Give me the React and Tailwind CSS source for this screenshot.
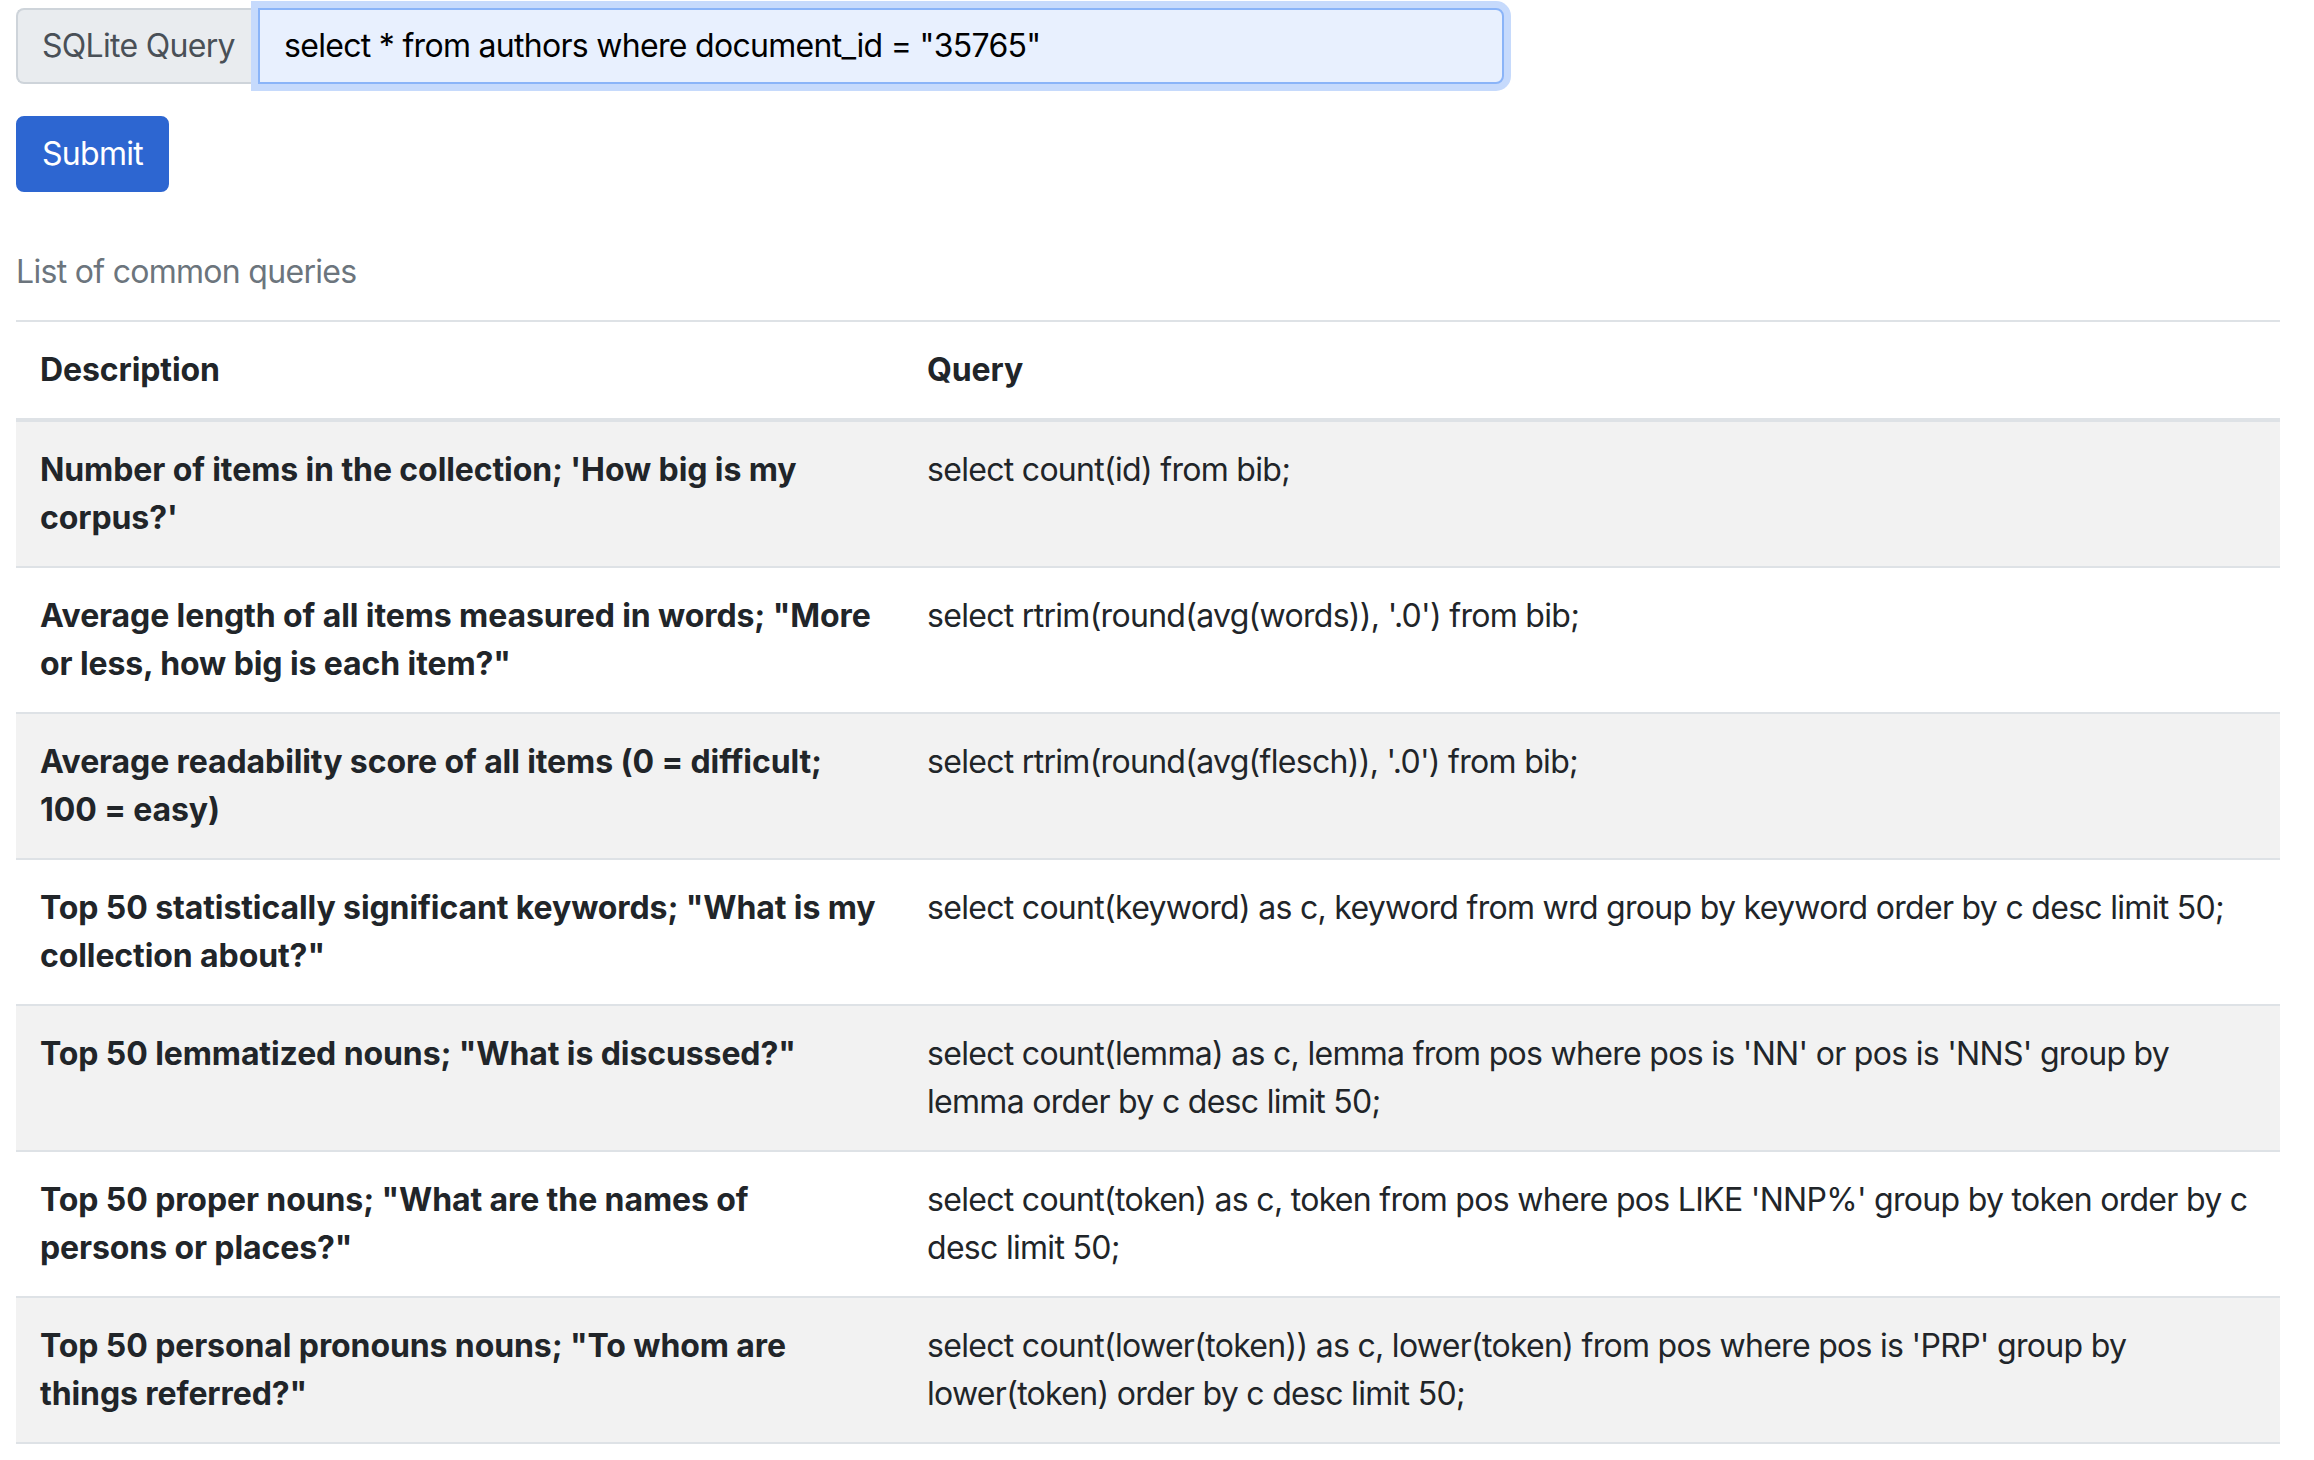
import React from 'react';

const queries = [
    {
        desc: "Number of items in the collection; 'How big is my corpus?'",
        sql: 'select count(id) from bib;'
    },
    {
        desc: 'Average length of all items measured in words; "More or less, how big is each item?"',
        sql: "select rtrim(round(avg(words)), '.0') from bib;"
    },
    {
        desc: 'Average readability score of all items (0 = difficult; 100 = easy)',
        sql: "select rtrim(round(avg(flesch)), '.0') from bib;"
    },
    {
        desc: 'Top 50 statistically significant keywords; "What is my collection about?"',
        sql: 'select count(keyword) as c, keyword from wrd group by keyword order by c desc limit 50;'
    },
    {
        desc: 'Top 50 lemmatized nouns; "What is discussed?"',
        sql: "select count(lemma) as c, lemma from pos where pos is 'NN' or pos is 'NNS' group by lemma order by c desc limit 50;"
    },
    {
        desc: 'Top 50 proper nouns; "What are the names of persons or places?"',
        sql: "select count(token) as c, token from pos where pos LIKE 'NNP%' group by token order by c desc limit 50;"
    },
    {
        desc: 'Top 50 personal pronouns nouns; "To whom are things referred?"',
        sql: "select count(lower(token)) as c, lower(token) from pos where pos is 'PRP' group by lower(token) order by c desc limit 50;"
    }
];

const App = () => {
    return (
        <div className="min-h-screen bg-white pt-[8px] pl-[16px] text-[32px] leading-[48px] tracking-[-0.7px] text-[#212529] font-['Inter',sans-serif]">
            <form onSubmit={(e) => e.preventDefault()}>
                {/* input group */}
                <div className="flex w-[1488px] h-[76px]">
                    <span className="flex items-center px-[24px] bg-[#e9ecef] border-2 border-[#ced4da] border-r-0 rounded-l-[8px] text-[#495057] whitespace-nowrap w-[242px]">
                        SQLite Query
                    </span>
                    <input
                        className="relative z-10 flex-1 px-[24px] bg-[#e8f0fe] border-2 border-[#8ab4f8] rounded-r-[8px] text-black outline-none shadow-[0_0_0_7px_#c6dafc] tracking-[-0.7px]"
                        defaultValue={'select * from authors where document_id = "35765"'}
                    />
                </div>

                <button
                    type="submit"
                    className="mt-[32px] px-[24px] py-[12px] bg-[#2d66d1] border-2 border-[#2d66d1] rounded-[8px] text-white tracking-[-0.7px]"
                >
                    Submit
                </button>
            </form>

            <table className="mt-[32px] w-[2264px] border-collapse">
                <caption className="caption-top text-left py-[24px] text-[#6c757d]">List of common queries</caption>
                <thead>
                    <tr>
                        <th className="w-[887px] text-left align-bottom p-[24px] border-t-2 border-b-4 border-[#dee2e6] font-bold tracking-[-0.1px]">Description</th>
                        <th className="text-left align-bottom p-[24px] border-t-2 border-b-4 border-[#dee2e6] font-bold tracking-[-0.1px]">Query</th>
                    </tr>
                </thead>
                <tbody>
                    {queries.map((q, i) => (
                        <tr key={i} className={i % 2 === 0 ? 'bg-[#f2f2f2]' : ''}>
                            <td className="align-top p-[24px] border-t-2 border-[#dee2e6] font-bold tracking-[-0.1px]">{q.desc}</td>
                            <td className="align-top p-[24px] border-t-2 border-[#dee2e6]">{q.sql}</td>
                        </tr>
                    ))}
                    <tr>
                        <td colSpan={2} className="border-t-2 border-[#dee2e6] p-0 h-0"></td>
                    </tr>
                </tbody>
            </table>
        </div>
    );
};

export default App;
